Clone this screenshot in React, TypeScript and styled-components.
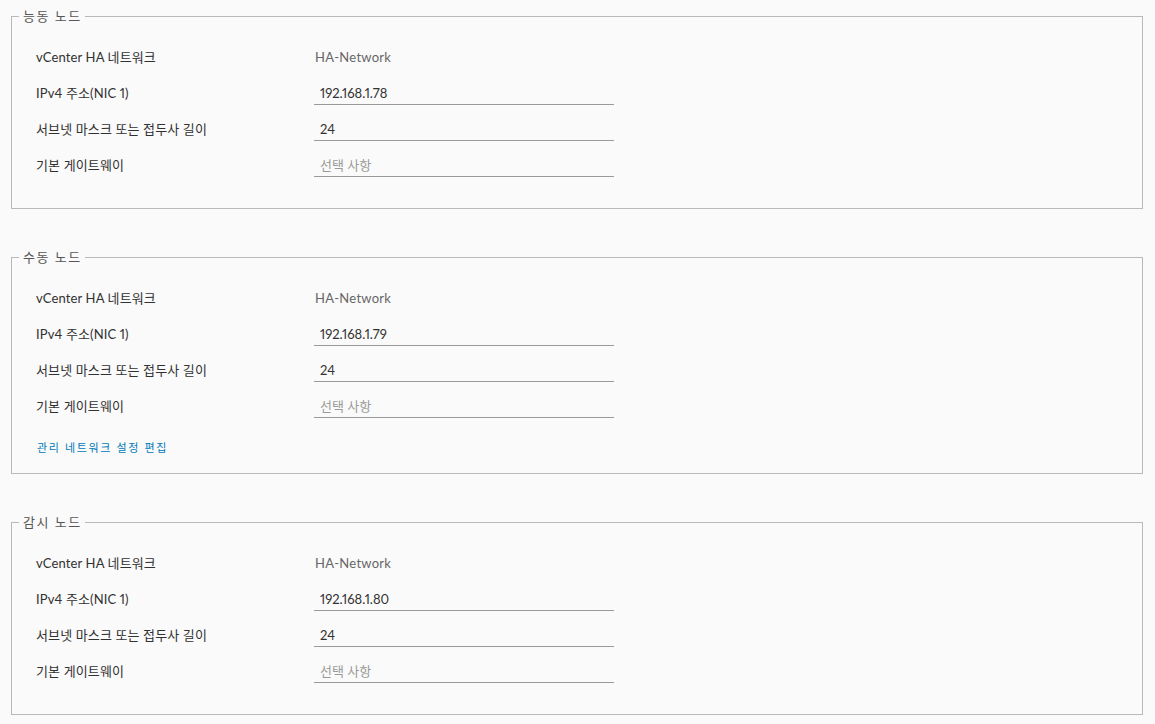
import { Fragment } from "react";
import styled, { createGlobalStyle } from "styled-components";

const GlobalStyle = createGlobalStyle`
	html, body {
		margin: 0;
		padding: 0;
		background: #fafafa;
		font-family: Lato, "Noto Sans CJK KR", sans-serif;
		font-variant-numeric: proportional-nums;
		color: #313131;
	}
`;

const Page = styled.div`
	padding: 7px 12px 0 11px;
	display: flex;
	flex-direction: column;
	gap: 39px;
`;

const NodeSet = styled.fieldset<{ $bottom: number; }>`
	margin: 0;
	border: 1px solid #b9b9b9;
	padding: 14px 0 ${(p) => p.$bottom}px 24px;
	min-width: 0;
`;

const NodeLegend = styled.legend`
	margin-left: -17px;
	padding: 0 3px 0 4px;
	font-size: 13px;
	line-height: 18px;
	letter-spacing: 1.5px;
	color: #565656;
`;

const FieldRow = styled.div`
	display: grid;
	grid-template-columns: 278px 300px;
	align-items: center;
	height: 36px;
	line-height: 16px;
`;

const FieldLabel = styled.span`
	font-size: 13px;
	letter-spacing: 0.01em;
	color: #313131;
	margin-top: -1px;
`;

const StaticValue = styled.span`
	font-size: 13px;
	letter-spacing: 0.02em;
	color: #666;
	padding-left: 1px;
	margin-top: -1px;
`;

const TextInput = styled.input`
	box-sizing: border-box;
	width: 300px;
	height: 24px;
	border: none;
	border-bottom: 1px solid #9a9a9a;
	background: transparent;
	padding: 0 6px;
	font-family: inherit;
	font-variant-numeric: proportional-nums;
	font-size: 13px;
	color: #313131;
	outline: none;

	&::placeholder {
		color: #9a9a9a;
	}
`;

const EditLink = styled.a`
	display: block;
	margin-top: 15px;
	line-height: 18px;
	font-size: 11px;
	letter-spacing: 0.15em;
	color: #0079b8;
	cursor: pointer;
	padding-left: 1px;
`;

const NODES = [
	{ title: "능동 노드", ip: "192.168.1.78", edit: false },
	{ title: "수동 노드", ip: "192.168.1.79", edit: true },
	{ title: "감시 노드", ip: "192.168.1.80", edit: false },
];

export default function App() {
	return (
		<Fragment>
			<GlobalStyle />
			<Page>
				{NODES.map((n, i) => (
					<NodeSet key={i} $bottom={n.edit ? 16 : 25}>
						<NodeLegend>{n.title}</NodeLegend>
						<FieldRow>
							<FieldLabel>vCenter HA 네트워크</FieldLabel>
							<StaticValue>HA-Network</StaticValue>
						</FieldRow>
						<FieldRow>
							<FieldLabel>IPv4 주소(NIC 1)</FieldLabel>
							<TextInput defaultValue={n.ip} />
						</FieldRow>
						<FieldRow>
							<FieldLabel>서브넷 마스크 또는 접두사 길이</FieldLabel>
							<TextInput defaultValue="24" />
						</FieldRow>
						<FieldRow>
							<FieldLabel>기본 게이트웨이</FieldLabel>
							<TextInput placeholder="선택 사항" />
						</FieldRow>
						{n.edit && <EditLink>관리 네트워크 설정 편집</EditLink>}
					</NodeSet>
				))}
			</Page>
		</Fragment>
	);
}
